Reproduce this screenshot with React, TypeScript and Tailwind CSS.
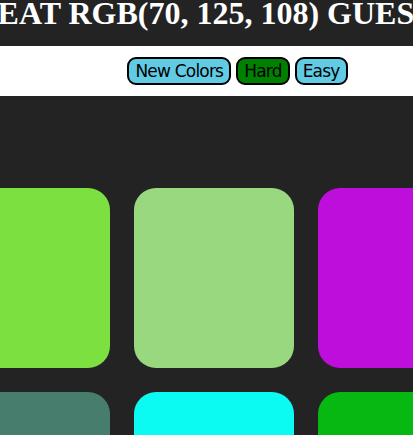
const squares = ["#7ce041", "#9ad87f", "#bd0edb", "#467d6c", "#0bfaf2", "#08b812"];

const buttons = [
    { label: "New Colors", active: false },
    { label: "Hard", active: true },
    { label: "Easy", active: false },
];

const App = () => {
    //______________renders _______________
    const renderButtons = buttons.map((b) => (
        <button
            key={b.label}
            className={`h-[28px] rounded-[9px] border-2 border-black px-1.5 text-[17px] leading-none tracking-[-0.8px] text-black ${b.active ? "bg-[#008000]" : "bg-[#62cbe4]"}`}
        >
            {b.label}
        </button>
    ));

    const renderSquares = squares.map((color) => (
        <div key={color} className="h-[180px] w-[160px] rounded-[22px]" style={{ backgroundColor: color }}></div>
    ));

    return (
        <div className="h-screen overflow-hidden bg-[#232323]">
            <header className="flex h-[46px] justify-center overflow-hidden pl-[61px]">
                <h1 className="shrink-0 whitespace-nowrap text-[32px] font-bold uppercase leading-[26px] text-white [font-family:'Liberation_Serif',serif]">
                    The Great RGB(70, 125, 108) Guessing Game
                </h1>
            </header>
            <div className="flex h-[50px] items-center justify-center gap-[5px] bg-white pl-[62px] [font-family:'DejaVu_Sans',sans-serif]">
                {renderButtons}
            </div>
            <div className="flex justify-center pl-[15px] pt-[92px]">
                <div className="grid shrink-0 grid-cols-[repeat(3,160px)] gap-6">{renderSquares}</div>
            </div>
        </div>
    );
};

export default App;
